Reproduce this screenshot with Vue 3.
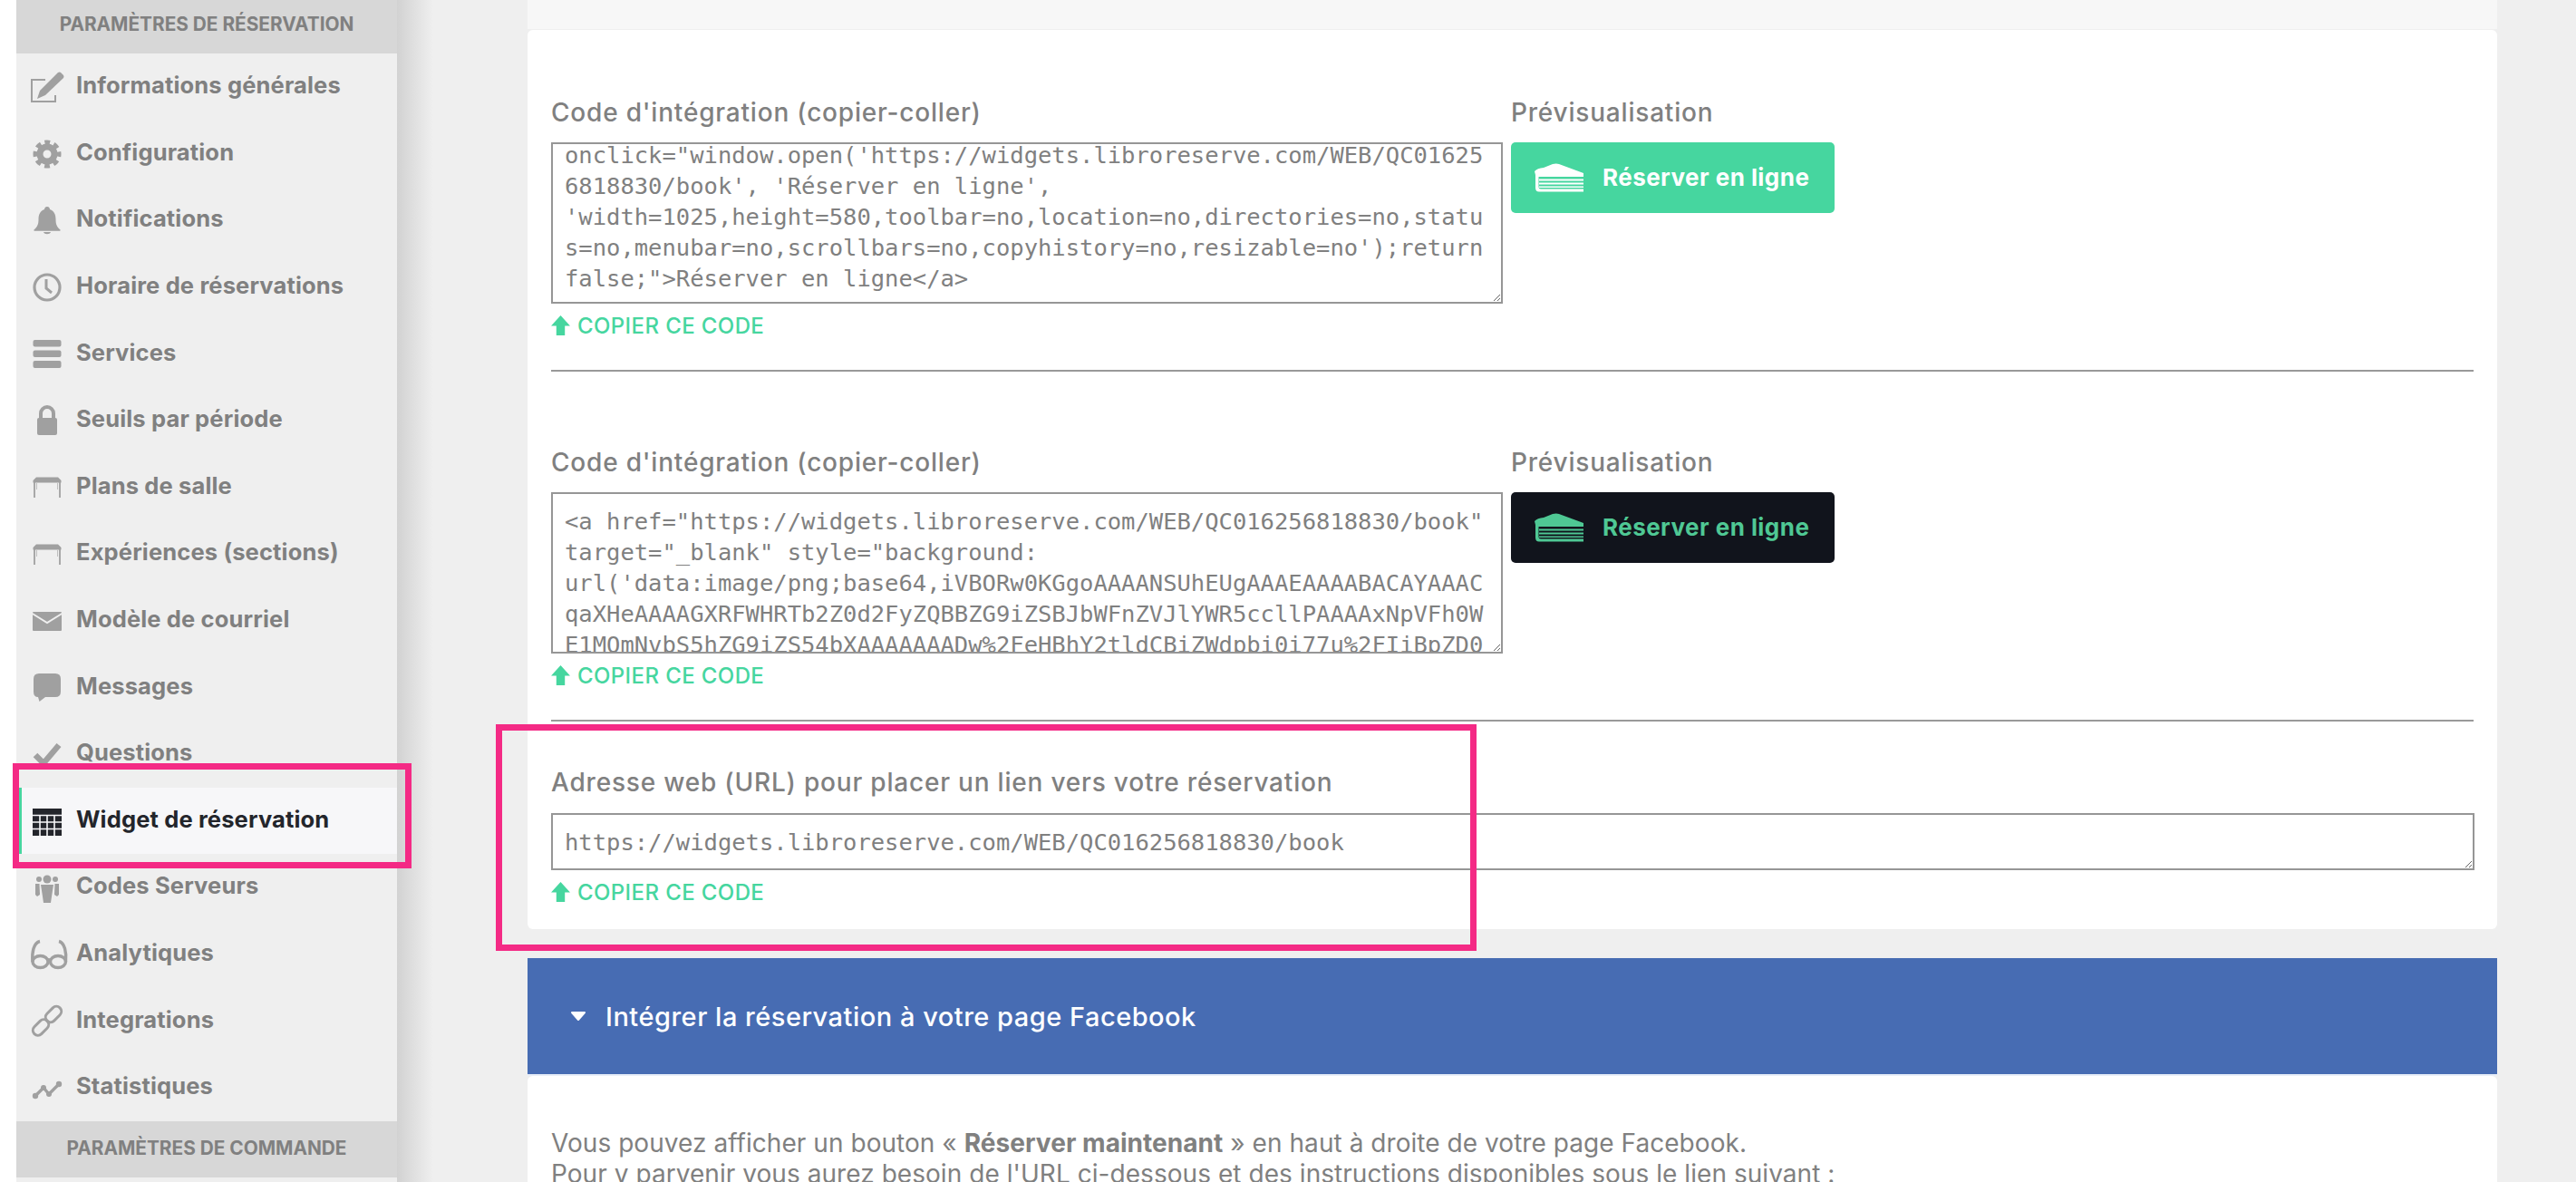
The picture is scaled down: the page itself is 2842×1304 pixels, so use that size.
<script setup>
const navItems = [
  { label: 'Informations générales', icon: 'edit' },
  { label: 'Configuration', icon: 'gear' },
  { label: 'Notifications', icon: 'bell' },
  { label: 'Horaire de réservations', icon: 'clock' },
  { label: 'Services', icon: 'bars' },
  { label: 'Seuils par période', icon: 'lock' },
  { label: 'Plans de salle', icon: 'table' },
  { label: 'Expériences (sections)', icon: 'table' },
  { label: 'Modèle de courriel', icon: 'mail' },
  { label: 'Messages', icon: 'chat' },
  { label: 'Questions', icon: 'check' },
  { label: 'Widget de réservation', icon: 'grid', active: true },
  { label: 'Codes Serveurs', icon: 'people' },
  { label: 'Analytiques', icon: 'glasses' },
  { label: 'Integrations', icon: 'link' },
  { label: 'Statistiques', icon: 'stats' }
]
const firstCode = [
  `onclick="window.open('https://widgets.libroreserve.com/WEB/QC01625`,
  `6818830/book', 'Réserver en ligne',`,
  `'width=1025,height=580,toolbar=no,location=no,directories=no,statu`,
  `s=no,menubar=no,scrollbars=no,copyhistory=no,resizable=no');return`,
  `false;">Réserver en ligne</a>`
]
const secondCode = [
  `<a href="https://widgets.libroreserve.com/WEB/QC016256818830/book"`,
  `target="_blank" style="background:`,
  `url('data:image/png;base64,iVBORw0KGgoAAAANSUhEUgAAAEAAAABACAYAAAC`,
  `qaXHeAAAAGXRFWHRTb2Z0d2FyZQBBZG9iZSBJbWFnZVJlYWR5ccllPAAAAxNpVFh0W`,
  `E1MOmNvbS5hZG9iZS54bXAAAAAAADw%2FeHBhY2tldCBiZWdpbi0i77u%2FIiBpZD0`
]
const sections = [
  { lines: firstCode, scrolled: true, dark: false },
  { lines: secondCode, scrolled: false, dark: true }
]
</script>

<template>
  <div class="page">
    <aside class="sidebar">
      <div class="side-head">PARAMÈTRES DE RÉSERVATION</div>
      <div v-for="n in navItems" :key="n.label" class="nav-row" :class="{ active: n.active }">
        <svg class="ico" viewBox="0 0 36 36" width="36" height="36">
          <g v-if="n.icon === 'edit'">
            <path d="M16 10H1V34H27V27" fill="none" stroke="currentColor" stroke-width="2" />
            <path d="M7 31L10 22 30 2Q32 1 33 2L36 5Q37 6 36 8L16 27Z" fill="currentColor" />
          </g>
          <g v-else-if="n.icon === 'gear'">
            <circle cx="18" cy="19" r="8" fill="none" stroke="currentColor" stroke-width="7" />
            <circle cx="18" cy="19" r="13" fill="none" stroke="currentColor" stroke-width="5" stroke-dasharray="5.8 4.4" stroke-dashoffset="3" />
          </g>
          <path v-else-if="n.icon === 'bell'" fill="currentColor" d="M18 3c-2 0-3 1.5-3 3C10 8 8.5 12 8.5 17c0 5-1 8-5 11.5-.5.6 0 1.2 1 1.2h27c1 0 1.5-.6 1-1.2C28.5 25 27.5 22 27.5 17 27.500 12 26 8 21 6c0-1.500-1-3-3-3zM14 31h8c-1 3-7 3-8 0z" />
          <g v-else-if="n.icon === 'clock'" fill="none" stroke="currentColor">
            <circle cx="18" cy="18" r="14" stroke-width="3.200" />
            <path d="M17 9V19L23 24" stroke-width="3" />
          </g>
          <g v-else-if="n.icon === 'bars'" fill="currentColor">
            <rect x="2.500" y="3" width="31" height="7.500" rx="2" />
            <rect x="2.500" y="14.500" width="31" height="7.500" rx="2" />
            <rect x="2.500" y="26" width="31" height="8" rx="2" />
          </g>
          <g v-else-if="n.icon === 'lock'">
            <path d="M11 15V10a7 7 0 0 1 14 0v5" fill="none" stroke="currentColor" stroke-width="4" />
            <rect x="7" y="15" width="22" height="19" rx="2" fill="currentColor" />
          </g>
          <g v-else-if="n.icon === 'table'">
            <path d="M2.500 11L6 7.500H30L33.500 11V13.500H2.500Z" fill="currentColor" />
            <path d="M4 13V30M32 13V30" stroke="currentColor" stroke-width="1.800" />
            <path d="M6.500 14V21M29.500 14V21" stroke="currentColor" stroke-width="1" opacity=".6" />
          </g>
          <g v-else-if="n.icon === 'mail'">
            <rect x="2" y="8" width="32" height="21" rx="1" fill="currentColor" />
            <path d="M1 9.500L18 20 35 9.500" fill="none" stroke="#efefef" stroke-width="2" />
          </g>
          <path v-else-if="n.icon === 'chat'" fill="currentColor" d="M9 3H27Q33 3 33 9V23Q33 29 27 29H16L9.500 34 8 29Q3 29 3 23V9Q3 3 9 3Z" />
          <path v-else-if="n.icon === 'check'" d="M5 19L14 28 31 8" fill="none" stroke="currentColor" stroke-width="6.500" />
          <g v-else-if="n.icon === 'grid'">
            <rect x="2" y="5" width="32" height="30" fill="currentColor" />
            <path d="M2 12.500H34M2 20H34M2 27.500H34M10 13V35M18 13V35M26 13V35" stroke="#f7f7f9" stroke-width="1.600" />
          </g>
          <g v-else-if="n.icon === 'people'" fill="currentColor">
            <circle cx="18" cy="9" r="4.500" />
            <circle cx="9" cy="9" r="3" />
            <circle cx="27" cy="9" r="3" />
            <path d="M11 15H25L23 28 22 35H14L13 28Z" />
            <path d="M5 14H9.500L10 26 7 28 5 26Z" />
            <path d="M31 14H26.500L26 26 29 28 31 26Z" />
          </g>
          <g v-else-if="n.icon === 'glasses'" fill="none" stroke="currentColor" stroke-width="3.400">
            <ellipse cx="10.500" cy="26" rx="8.500" ry="6.500" />
            <ellipse cx="30" cy="26" rx="8.500" ry="6.500" />
            <path d="M18.500 24H22M2 26C1 16 3 5 10 3.500M38.500 26C39.500 16 37.500 5 31 3.500" />
          </g>
          <g v-else-if="n.icon === 'link'" fill="none" stroke="currentColor" stroke-width="3">
            <rect x="15" y="5.500" width="20" height="11" rx="5.500" transform="rotate(-45 25 11)" />
            <rect x="1" y="20" width="20" height="11" rx="5.500" transform="rotate(-45 11 25.500)" />
          </g>
          <g v-else-if="n.icon === 'stats'">
            <path d="M5 27L14 18 20 25 31 14" fill="none" stroke="currentColor" stroke-width="3.400" />
            <circle cx="5" cy="27" r="3.200" fill="currentColor" />
            <circle cx="14" cy="18" r="3" fill="currentColor" />
            <circle cx="20" cy="25" r="3" fill="currentColor" />
            <circle cx="31" cy="14" r="3.200" fill="currentColor" />
          </g>
        </svg>
        <span class="nav-label">{{ n.label }}</span>
      </div>
      <div class="side-head second">PARAMÈTRES DE COMMANDE</div>
    </aside>
    <div class="shade"></div>

    <main class="main">
      <div class="strip"></div>
      <section class="card">
        <template v-for="(s, i) in sections" :key="i">
          <div class="embed">
            <div>
              <div class="label">Code d'intégration (copier-coller)</div>
              <div class="codebox tall" :class="{ scrolled: s.scrolled }">
                <div class="code-inner">
                  <div v-for="l in s.lines" :key="l" class="code-line">{{ l }}</div>
                </div>
              </div>
              <div class="copy">
                <svg width="21" height="22" viewBox="0 0 20 21"><path d="M10 0L20 11H14.500V21H5.500V11H0Z" fill="currentColor" /></svg>
                <span>COPIER CE CODE</span>
              </div>
            </div>
            <div>
              <div class="label">Prévisualisation</div>
              <div class="book" :class="{ dark: s.dark }">
                <svg class="cake" viewBox="0 0 54 32" width="54" height="32">
                  <path fill="currentColor" d="M0 9Q3 5.500 10 5L20 1Q24 0 27 1L54 11V15H1.500Z" />
                  <path fill="currentColor" d="M1 12H4.500V26Q4.500 28.500 7 28.500H54V31.500H5Q1 31.500 1 27Z" />
                  <path fill="currentColor" d="M5 17.500H54V19.500H5ZM5 21.500H54V23.500H5ZM5 25.500H54V27H5Z" />
                </svg>
                <span class="book-text">Réserver en ligne</span>
              </div>
            </div>
          </div>
          <hr class="rule" />
        </template>
        <div class="url-block">
          <div class="label">Adresse web (URL) pour placer un lien vers votre réservation</div>
          <div class="codebox short">
            <div class="code-inner">
              <div class="code-line">https://widgets.libroreserve.com/WEB/QC016256818830/book</div>
            </div>
          </div>
          <div class="copy">
            <svg width="21" height="22" viewBox="0 0 20 21"><path d="M10 0L20 11H14.500V21H5.500V11H0Z" fill="currentColor" /></svg>
            <span>COPIER CE CODE</span>
          </div>
        </div>
      </section>

      <div class="fb-bar">
        <svg width="18" height="12" viewBox="0 0 18 12"><path d="M2 2H16L9 10Z" fill="#fff" stroke="#fff" stroke-width="2" stroke-linejoin="round" /></svg>
        <span>Intégrer la réservation à votre page Facebook</span>
      </div>
      <section class="fb-card">
        <p>Vous pouvez afficher un bouton « <b>Réserver maintenant</b> » en haut à droite de votre page Facebook.</p>
        <p>Pour y parvenir vous aurez besoin de l'URL ci-dessous et des instructions disponibles sous le lien suivant :</p>
      </section>
    </main>

    <div class="mark mark-nav"></div>
    <div class="mark mark-url"></div>
  </div>
</template>

<style scoped>
.page {
  position: relative;
  display: flex;
  width: 2842px;
  height: 1304px;
  overflow: hidden;
  background: #efefef;
  font-family: Inter, "Noto Sans", sans-serif;
  color: #808080;
}
.sidebar {
  width: 420px;
  margin-left: 18px;
  flex: none;
  background: #efefef;
  box-shadow: -18px 0 0 #fff;
}
.side-head {
  height: 59px;
  background: #d7d7d7;
  text-align: center;
  font-size: 20.8px;
  font-weight: 700;
  line-height: 54px;
}
.side-head.second {
  height: 62px;
  line-height: 60px;
}
.nav-row {
  height: 73.6px;
  display: flex;
  align-items: center;
  padding-left: 16px;
  box-sizing: border-box;
  color: #808080;
}
.nav-row .ico {
  color: #a0a0a0;
  flex: none;
  overflow: visible;
}
.nav-label {
  margin-left: 14px;
  font-size: 25.5px;
  font-weight: 700;
  letter-spacing: 0.15px;
  position: relative;
  top: -2px;
  white-space: nowrap;
}
.nav-row.active {
  background: #f7f7f9;
  color: #23252b;
  padding-left: 10px;
  border-left: 6px solid #46d69f;
}
.nav-row.active .ico {
  color: #23252b;
}
.shade {
  width: 40px;
  flex: none;
  background: linear-gradient(90deg, #d2d2d2, #efefef);
}
.main {
  width: 2173px;
  margin-left: 104px;
  flex: none;
}
.strip {
  height: 32px;
  background: #f7f7f7;
  margin-bottom: 1px;
}
.card {
  background: #fff;
  border-radius: 6px;
  padding: 71px 26px 27px;
  height: 992px;
  box-sizing: border-box;
}
.embed {
  display: grid;
  grid-template-columns: 1050px 1fr;
  column-gap: 9px;
}
.label {
  font-size: 28px;
  font-weight: 500;
  letter-spacing: 0.8px;
  line-height: 41px;
  height: 40px;
  margin-bottom: 13px;
  white-space: nowrap;
}
.url-block .label {
  margin-bottom: 14px;
}
.codebox {
  border: 2px solid #969696;
  box-sizing: border-box;
  overflow: hidden;
  resize: both;
  background: #fff;
  width: 100%;
  font-family: "DejaVu Sans Mono", monospace;
  font-size: 25.5px;
  line-height: 34px;
  color: #808080;
}
.codebox.tall {
  height: 178px;
  padding: 13px 13px 0;
}
.codebox.tall.scrolled {
  padding-top: 0;
}
.codebox.tall.scrolled .code-inner {
  margin-top: -5px;
}
.codebox.short {
  height: 63px;
  width: 2122px;
  padding: 13px 13px 0;
}
.code-line {
  white-space: pre;
}
.copy {
  display: flex;
  align-items: center;
  gap: 8px;
  margin-top: 9px;
  height: 30px;
  color: #46d69f;
  font-size: 24px;
  font-weight: 500;
  letter-spacing: 0.4px;
  white-space: nowrap;
}
.rule {
  border: 0;
  height: 2px;
  margin: 34px 0 80px;
  background: #999;
}
.rule:last-of-type {
  margin-bottom: 47px;
}
.book {
  width: 357px;
  height: 78px;
  border-radius: 5px;
  background: #46d69f;
  color: #fff;
  display: flex;
  align-items: center;
  padding-left: 26px;
  box-sizing: border-box;
  font-size: 26px;
  font-weight: 700;
  letter-spacing: 0.45px;
  white-space: nowrap;
}
.book .cake {
  flex: none;
  margin-right: 21px;
}
.book-text {
  position: relative;
  top: -1px;
}
.book.dark {
  background: #11141c;
  color: #4fc894;
}
.fb-bar {
  margin-top: 32px;
  height: 128px;
  background: #476cb3;
  color: #fff;
  display: flex;
  align-items: center;
  padding-left: 47px;
  gap: 21px;
  font-size: 29px;
  font-weight: 500;
  letter-spacing: 0.5px;
  border-bottom: 2px solid #e8eef8;
  box-sizing: content-box;
}
.fb-card {
  background: #fff;
  border-radius: 6px;
  padding: 57px 26px 0;
  height: 200px;
  box-sizing: border-box;
  font-size: 28px;
  letter-spacing: 0.05px;
  line-height: 34px;
}
.fb-card p {
  margin: 0;
  white-space: nowrap;
}
.mark {
  position: absolute;
  border: 7px solid #f42a85;
  box-sizing: border-box;
  pointer-events: none;
}
.mark-nav {
  left: 14px;
  top: 842px;
  width: 440px;
  height: 116px;
}
.mark-url {
  left: 547px;
  top: 799px;
  width: 1082px;
  height: 250px;
}
</style>

<style>
html,
body {
  margin: 0;
  overflow: hidden;
  background: #fff;
}
</style>
